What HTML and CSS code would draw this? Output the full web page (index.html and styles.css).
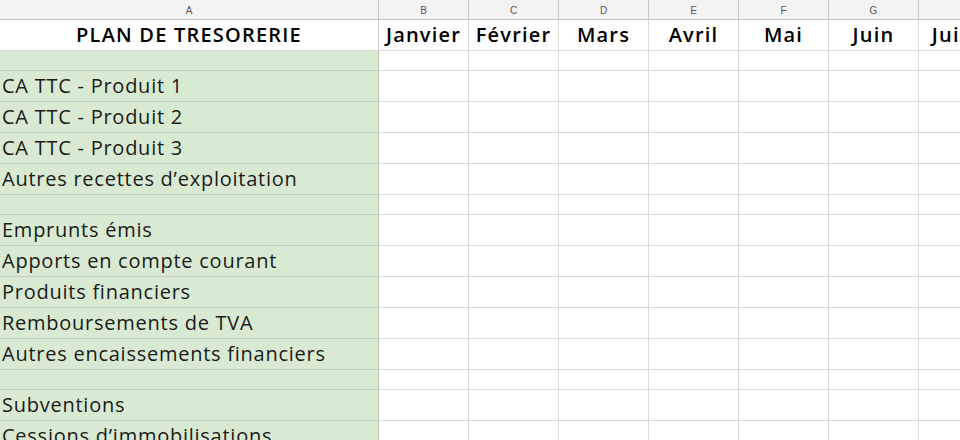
FILE: index.html
```html
<!DOCTYPE html>
<html lang="fr">
<head>
<meta charset="utf-8">
<title>Plan de trésorerie</title>
<link rel="stylesheet" href="styles.css">
</head>
<body>
<div class="sheet">
  <div class="colhead">A</div><div class="colhead">B</div><div class="colhead">C</div><div class="colhead">D</div><div class="colhead">E</div><div class="colhead">F</div><div class="colhead">G</div><div class="colhead">H</div>

  <div class="cell title label-col">PLAN DE TRESORERIE</div><div class="cell title">Janvier</div><div class="cell title">Février</div><div class="cell title">Mars</div><div class="cell title">Avril</div><div class="cell title">Mai</div><div class="cell title">Juin</div><div class="cell title">Juillet</div>

  <div class="cell label"></div><div class="cell"></div><div class="cell"></div><div class="cell"></div><div class="cell"></div><div class="cell"></div><div class="cell"></div><div class="cell"></div>
  <div class="cell label">CA TTC - Produit 1</div><div class="cell"></div><div class="cell"></div><div class="cell"></div><div class="cell"></div><div class="cell"></div><div class="cell"></div><div class="cell"></div>
  <div class="cell label">CA TTC - Produit 2</div><div class="cell"></div><div class="cell"></div><div class="cell"></div><div class="cell"></div><div class="cell"></div><div class="cell"></div><div class="cell"></div>
  <div class="cell label">CA TTC - Produit 3</div><div class="cell"></div><div class="cell"></div><div class="cell"></div><div class="cell"></div><div class="cell"></div><div class="cell"></div><div class="cell"></div>
  <div class="cell label">Autres recettes d’exploitation</div><div class="cell"></div><div class="cell"></div><div class="cell"></div><div class="cell"></div><div class="cell"></div><div class="cell"></div><div class="cell"></div>
  <div class="cell label"></div><div class="cell"></div><div class="cell"></div><div class="cell"></div><div class="cell"></div><div class="cell"></div><div class="cell"></div><div class="cell"></div>
  <div class="cell label">Emprunts émis</div><div class="cell"></div><div class="cell"></div><div class="cell"></div><div class="cell"></div><div class="cell"></div><div class="cell"></div><div class="cell"></div>
  <div class="cell label">Apports en compte courant</div><div class="cell"></div><div class="cell"></div><div class="cell"></div><div class="cell"></div><div class="cell"></div><div class="cell"></div><div class="cell"></div>
  <div class="cell label">Produits financiers</div><div class="cell"></div><div class="cell"></div><div class="cell"></div><div class="cell"></div><div class="cell"></div><div class="cell"></div><div class="cell"></div>
  <div class="cell label">Remboursements de TVA</div><div class="cell"></div><div class="cell"></div><div class="cell"></div><div class="cell"></div><div class="cell"></div><div class="cell"></div><div class="cell"></div>
  <div class="cell label">Autres encaissements financiers</div><div class="cell"></div><div class="cell"></div><div class="cell"></div><div class="cell"></div><div class="cell"></div><div class="cell"></div><div class="cell"></div>
  <div class="cell label"></div><div class="cell"></div><div class="cell"></div><div class="cell"></div><div class="cell"></div><div class="cell"></div><div class="cell"></div><div class="cell"></div>
  <div class="cell label">Subventions</div><div class="cell"></div><div class="cell"></div><div class="cell"></div><div class="cell"></div><div class="cell"></div><div class="cell"></div><div class="cell"></div>
  <div class="cell label">Cessions d’immobilisations</div><div class="cell"></div><div class="cell"></div><div class="cell"></div><div class="cell"></div><div class="cell"></div><div class="cell"></div><div class="cell"></div>
</div>
</body>
</html>
```
FILE: styles.css
```css
html, body {
  margin: 0;
  padding: 0;
  background: #ffffff;
  overflow: hidden;
  width: 960px;
  height: 440px;
}

.sheet {
  display: grid;
  grid-template-columns: 379px repeat(7, 90px);
  grid-template-rows: 20px 31px 20px 31px 31px 31px 31px 20px 31px 31px 31px 31px 31px 20px 31px 31px;
  font-family: "Open Sans", Lato, sans-serif;
  color: #1a1a1a;
}

.colhead {
  box-sizing: border-box;
  background: #f3f3f3;
  border-right: 1px solid #c8c8c8;
  border-bottom: 1px solid #c4c4c4;
  font-family: "Liberation Sans", Arial, sans-serif;
  font-size: 10px;
  color: #555555;
  display: flex;
  align-items: center;
  justify-content: center;
  padding-top: 1px;
}

.cell {
  box-sizing: border-box;
  border-right: 1px solid #dadada;
  border-bottom: 1px solid #dadada;
  display: flex;
  align-items: flex-end;
  padding: 0 2px 3px;
  font-size: 20px;
  line-height: 25px;
  letter-spacing: 0.75px;
  white-space: nowrap;
  overflow: visible;
}

.title {
  justify-content: center;
  font-weight: 600;
  color: #000000;
  letter-spacing: 1.2px;
  padding-bottom: 3px;
}

.title.label-col {
  border-right-color: #cfcfcf;
}

.label {
  background: #d9ead3;
  border-right: 1px solid #b9c7b3;
  border-bottom: 1px solid #c3d2bd;
  position: relative;
  z-index: 1;
}
```
